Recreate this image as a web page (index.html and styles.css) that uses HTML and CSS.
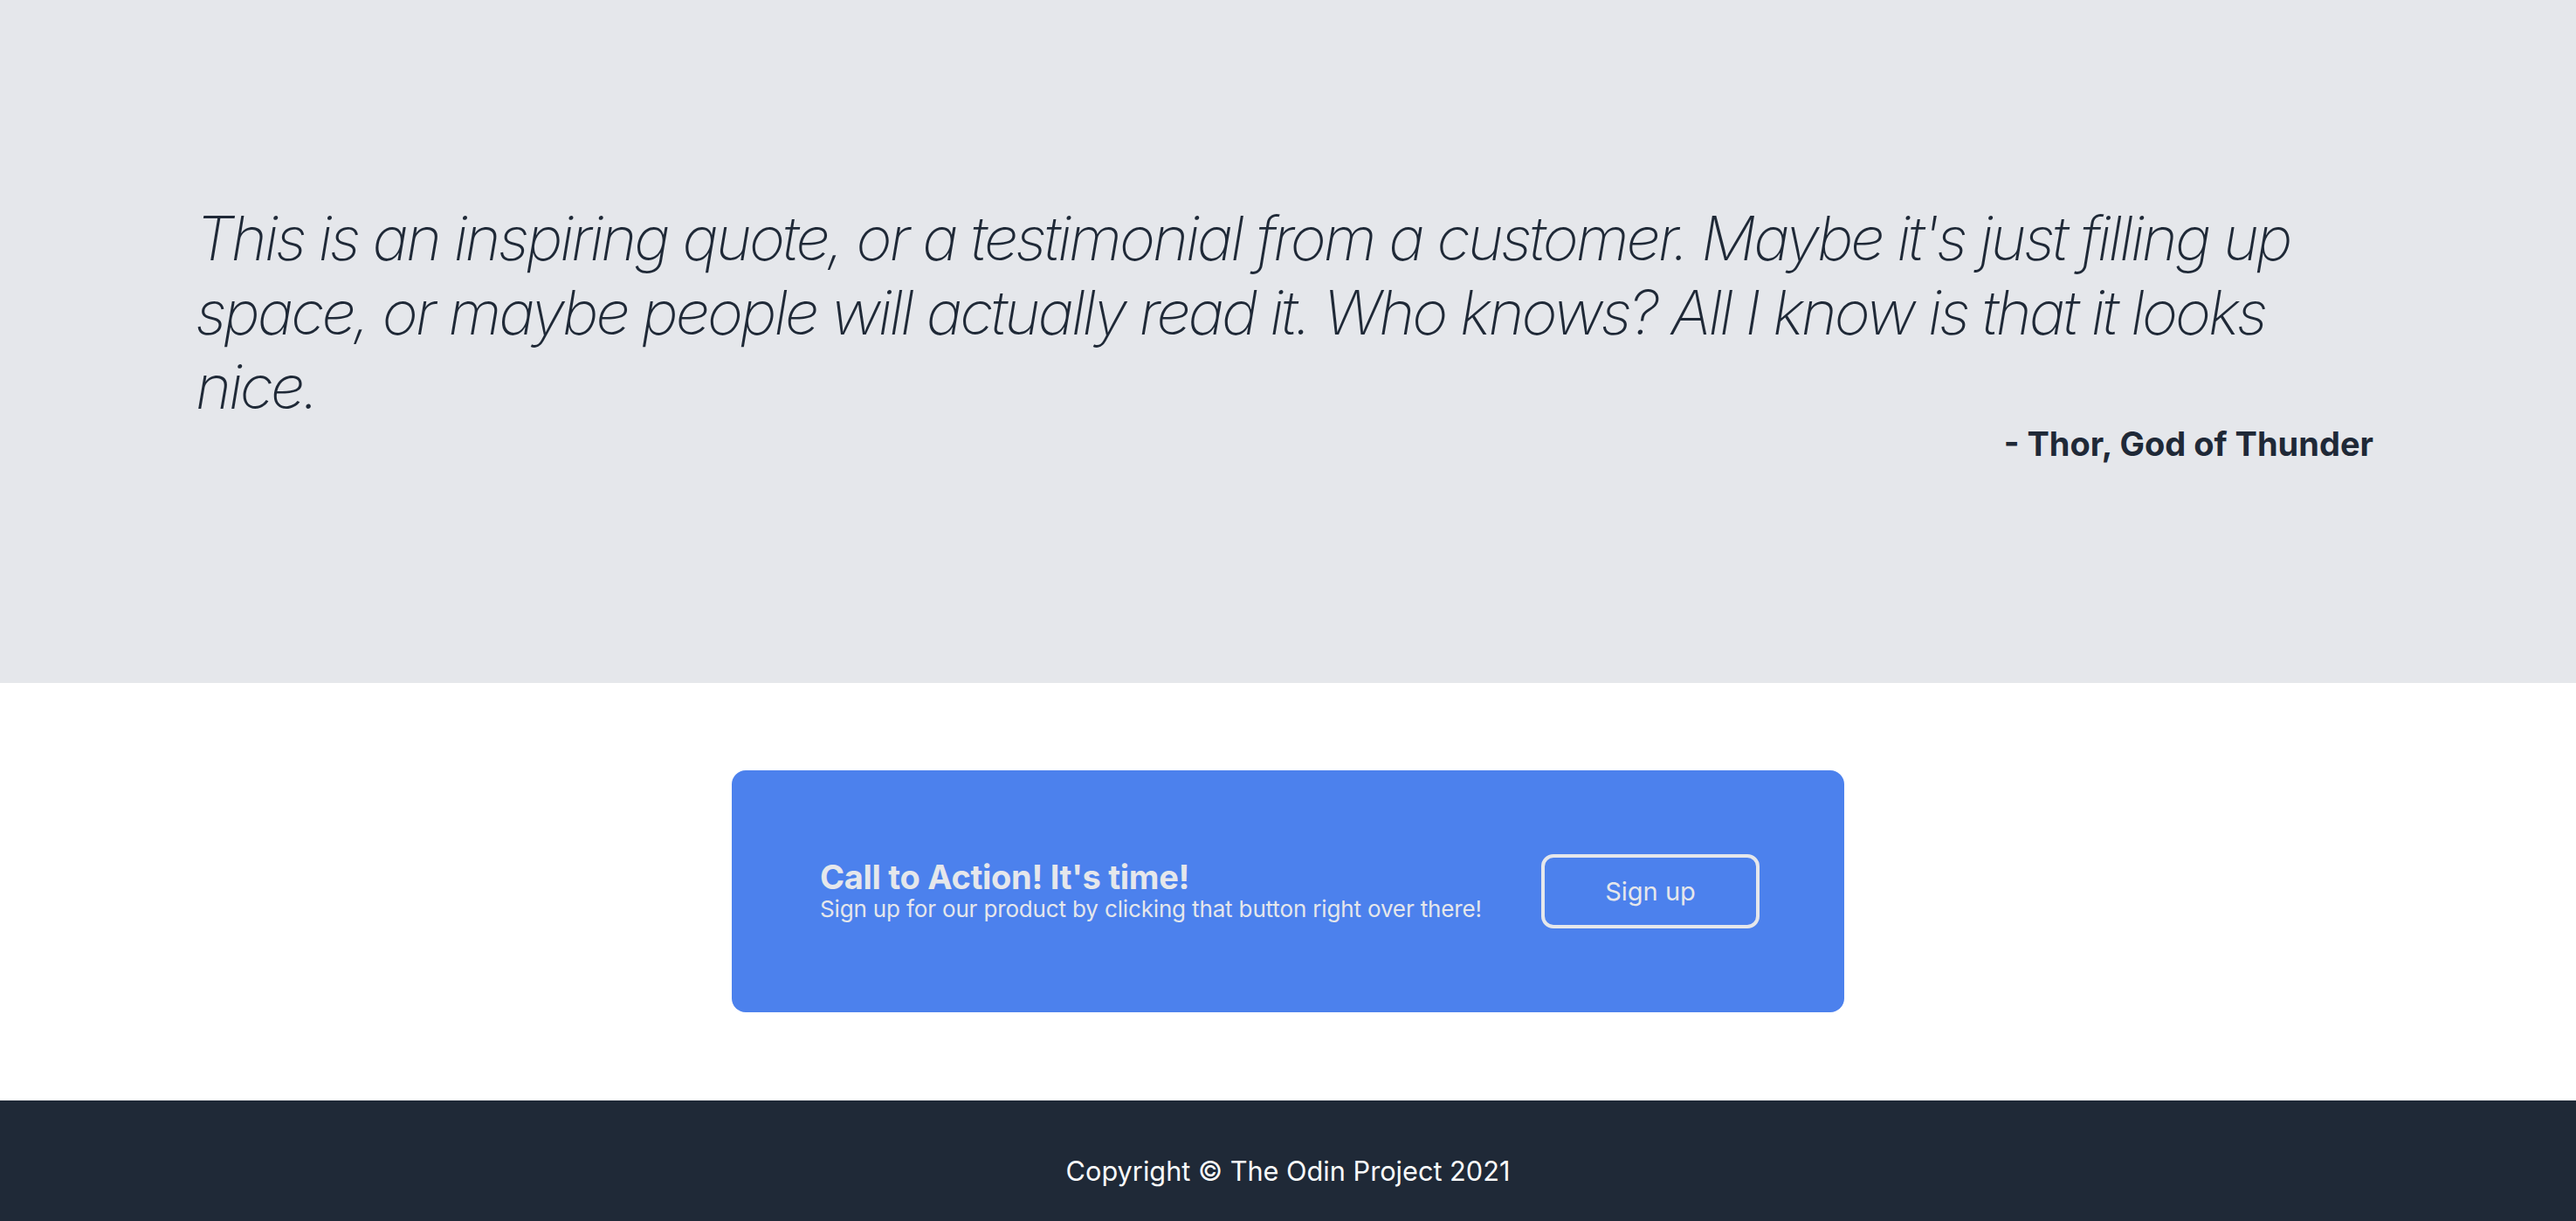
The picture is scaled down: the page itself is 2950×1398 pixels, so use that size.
FILE: index.html
```html
<!DOCTYPE html>
<html lang="en">
<head>
<meta charset="utf-8">
<title>Landing</title>
<link rel="stylesheet" href="styles.css">
</head>
<body>
  <section class="quote-section">
    <div class="quote-wrap">
      <p class="quote">This is an inspiring quote, or a testimonial from a customer. Maybe it's just filling up space, or maybe people will actually read it. Who knows? All I know is that it looks nice.</p>
      <p class="author">- Thor, God of Thunder</p>
    </div>
  </section>
  <section class="cta-section">
    <div class="cta">
      <div class="cta-text">
        <h2 class="cta-title">Call to Action! It's time!</h2>
        <p class="cta-sub">Sign up for our product by clicking that button right over there!</p>
      </div>
      <button class="cta-btn">Sign up</button>
    </div>
  </section>
  <footer class="footer">Copyright © The Odin Project 2021</footer>
</body>
</html>
```
FILE: styles.css
```css
* { box-sizing: border-box; }
body {
  margin: 0;
  font-family: Inter, "Noto Sans", sans-serif;
  color: #1f2937;
}
.quote-section {
  background: #e5e7eb;
  height: 782px;
  padding: 230px 232px 0 224px;
}
.quote {
  margin: 0;
  font-size: 70px;
  line-height: 85px;
  font-style: italic;
  font-weight: 200;
  letter-spacing: -3px;
}
.author {
  margin: 0;
  text-align: right;
  font-size: 38px;
  line-height: 46px;
  font-weight: 700;
}
.cta-section {
  background: #fff;
  padding: 100px 0 101px;
  display: flex;
  justify-content: center;
}
.cta {
  width: 1274px;
  height: 277px;
  background: #4c81ed;
  border-radius: 16px;
  padding: 0 97px 0 101px;
  display: flex;
  align-items: center;
  justify-content: space-between;
  color: #e5e7eb;
}
.cta-title {
  margin: 0;
  font-size: 38px;
  line-height: 40px;
  font-weight: 700;
  letter-spacing: -0.3px;
}
.cta-sub {
  margin: 0;
  font-size: 26px;
  line-height: 34px;
  letter-spacing: -0.15px;
}
.cta-btn {
  width: 250px;
  height: 85px;
  border: 4px solid #e5e7eb;
  border-radius: 14px;
  background: transparent;
  color: #e5e7eb;
  font-family: inherit;
  font-size: 29px;
}
.footer {
  background: #1f2937;
  color: #f9fafb;
  text-align: center;
  font-size: 30.7px;
  line-height: 36px;
  padding: 63px 0;
}
```
